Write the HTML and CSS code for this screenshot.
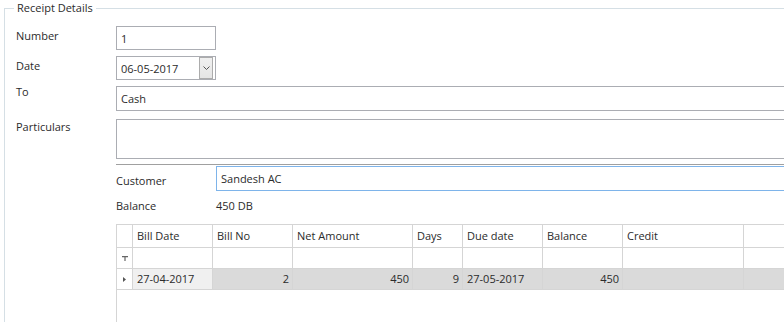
FILE: index.html
```html
<!DOCTYPE html>
<html lang="en">
<head>
    <meta charset="UTF-8">
    <meta name="viewport" content="width=device-width, initial-scale=1.0">
    <title>Receipt Details</title>
    <link rel="stylesheet" href="styles.css">
</head>
<body>
<fieldset class="group">
    <legend>Receipt Details</legend>

    <div class="field field-number">
        <span class="field-label">Number</span>
        <div class="textbox textbox-short">1</div>
    </div>

    <div class="field field-date">
        <span class="field-label">Date</span>
        <div class="textbox textbox-short datepicker">
            <span>06-05-2017</span>
            <span class="drop-button">
                <svg width="7" height="4" viewBox="0 0 7 4"><polyline points="0.5,0.5 3.5,3.5 6.5,0.5" fill="none" stroke="#555" stroke-width="1"/></svg>
            </span>
        </div>
    </div>

    <div class="field field-to">
        <span class="field-label">To</span>
        <div class="textbox textbox-wide">Cash</div>
    </div>

    <div class="field field-particulars">
        <span class="field-label">Particulars</span>
        <div class="textbox textbox-wide textbox-multi"></div>
    </div>

    <div class="details">
        <div class="separator"></div>

        <div class="field field-customer">
            <span class="field-label">Customer</span>
            <div class="textbox textbox-wide textbox-focus">Sandesh AC</div>
        </div>

        <div class="field field-balance">
            <span class="field-label">Balance</span>
            <span class="balance-value">450 DB</span>
        </div>

        <div class="grid">
            <div class="grid-row grid-head">
                <div class="cell row-head"></div>
                <div class="cell">Bill Date</div>
                <div class="cell">Bill No</div>
                <div class="cell">Net Amount</div>
                <div class="cell">Days</div>
                <div class="cell">Due date</div>
                <div class="cell">Balance</div>
                <div class="cell">Credit</div>
                <div class="cell"></div>
            </div>
            <div class="grid-row grid-filter">
                <div class="cell row-head">
                    <svg width="6" height="5" viewBox="0 0 6 5"><path d="M0 0H6V1.2H3.6V5H2.4V1.2H0Z" fill="#666"/></svg>
                </div>
                <div class="cell"></div>
                <div class="cell"></div>
                <div class="cell"></div>
                <div class="cell"></div>
                <div class="cell"></div>
                <div class="cell"></div>
                <div class="cell"></div>
                <div class="cell"></div>
            </div>
            <div class="grid-row grid-data">
                <div class="cell row-head">
                    <svg width="3" height="5" viewBox="0 0 3 5"><path d="M0 0L3 2.5L0 5Z" fill="#555"/></svg>
                </div>
                <div class="cell cell-current">27-04-2017</div>
                <div class="cell num">2</div>
                <div class="cell num">450</div>
                <div class="cell num">9</div>
                <div class="cell">27-05-2017</div>
                <div class="cell num">450</div>
                <div class="cell"></div>
                <div class="cell"></div>
            </div>
        </div>
    </div>
</fieldset>
</body>
</html>
```

FILE: styles.css
```css
html, body {
    height: 100%;
}

body {
    margin: 0;
    font-family: "Open Sans", "Segoe UI", sans-serif;
    font-size: 11px;
    color: #2b2b2b;
    background-color: #fff;
    overflow: hidden;
}

/* group box: right and bottom edges sit outside the window */
.group {
    margin: 0 0 0 4px;
    padding: 10px 0 0 11px;
    border: 1px solid #d5dfe5;
    border-right: 0;
    border-bottom: 0;
    width: calc(100% - 4px);
    height: 100%;
    box-sizing: border-box;
    overflow: hidden;
}

.group legend {
    margin-left: -2px;
    padding: 0 3px;
    line-height: 16px;
}

.field {
    display: flex;
    align-items: flex-start;
}

.field-label {
    flex: none;
    width: 100px;
    line-height: 16px;
    padding-top: 2px;
}

.textbox {
    box-sizing: border-box;
    height: 24px;
    padding: 0 4px;
    border: 1px solid #abadb3;
    display: flex;
    align-items: center;
    background-color: #fff;
}

.textbox-short {
    width: 100px;
}

.textbox-wide {
    flex: 1;
    margin-right: -10px;
}

.field-number {
    margin-bottom: 6px;
}

.field-date {
    margin-bottom: 6px;
}

.field-to {
    margin-bottom: 8px;
}

.field-to .textbox {
    height: 25px;
}

.field-to .field-label {
    padding-top: 0;
    margin-top: -2px;
}

.field-particulars {
    margin-bottom: 5px;
}

.field-particulars .field-label {
    padding-top: 0;
}

.textbox-multi {
    height: 40px;
}

.datepicker {
    padding-right: 2px;
    justify-content: space-between;
}

.drop-button {
    box-sizing: border-box;
    width: 14px;
    height: 22px;
    border: 1px solid #acacac;
    background: linear-gradient(#f0f0f0, #e5e5e5);
    display: flex;
    align-items: center;
    justify-content: center;
}

.details {
    margin-left: 100px;
}

.separator {
    height: 1px;
    background-color: #a0a0a0;
    margin-bottom: 1px;
}

.field-customer .textbox {
    height: 25px;
    border-color: #7eb4ea;
}

.field-customer .field-label {
    padding-top: 7px;
}

.field-balance {
    margin-top: 7px;
}

.field-balance .field-label {
    padding-top: 0;
}

.balance-value {
    line-height: 16px;
}

.grid {
    margin-top: 10px;
    margin-right: -10px;
    height: 120px;
    border-left: 1px solid #d5d5d5;
    border-top: 1px solid #d5d5d5;
}

.grid-row {
    display: grid;
    grid-template-columns: 16px 80px 80px 120px 50px 80px 80px 121px 1fr;
}

.cell {
    box-sizing: border-box;
    border-right: 1px solid #d5d5d5;
    border-bottom: 1px solid #d5d5d5;
    padding: 0 4px;
    white-space: nowrap;
    overflow: hidden;
}

.grid-head .cell {
    height: 23px;
    line-height: 22px;
}

.grid-filter .cell,
.grid-data .cell {
    height: 21px;
    line-height: 20px;
}

.row-head {
    padding: 0;
    display: flex;
    align-items: center;
    justify-content: center;
}

.grid-data .cell {
    background-color: #dadada;
}

.grid-data .row-head {
    background-color: #fff;
}

.grid-data .cell-current {
    background-color: #f0f0f0;
}

.num {
    text-align: right;
    padding-right: 3px;
}
```
